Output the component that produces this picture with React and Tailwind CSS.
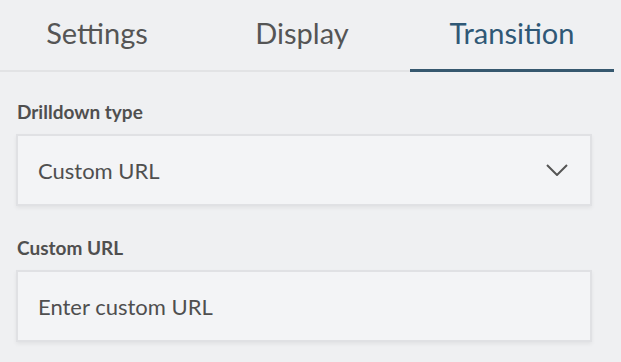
import React, { useState } from "react";

const tabs = ["Settings", "Display", "Transition"];
// widths picked so the labels sit where the design has them
const tabWidths = ["w-[194px]", "w-[216px]", "w-[204px]"];

function Chevron() {
  return (
    <svg width="22" height="12" viewBox="0 0 22 12" fill="none">
      <path d="M1 1 L11 11 L21 1" stroke="#555" strokeWidth="2" />
    </svg>
  );
}

export default function App() {
  const [active, setActive] = useState(2);

  return (
    <div className="w-[621px] h-[362px] bg-[#eff0f2] font-['Lato',sans-serif] text-[#4f4f4f]">
      {/* 탭 */}
      <div className="w-[614px] h-[72px] flex border-b-2 border-[#e2e3e5]">
        {tabs.map((t, i) => (
          <button
            key={t}
            onClick={() => setActive(i)}
            className={`relative ${tabWidths[i]} flex items-center justify-center pb-[4px] text-[29px] ${
              active === i ? "text-[#2f5876]" : "text-[#555555]"
            }`}
          >
            {t}
            {active === i && (
              <span className="absolute left-0 right-0 bottom-[-2px] h-[3px] bg-[#36586f]" />
            )}
          </button>
        ))}
      </div>

      <div className="ml-4 w-[576px]">
        {/* 드릴다운 타입 */}
        <div className="pt-[28px] pl-[1px] text-[19px] leading-[24px] font-bold">Drilldown type</div>
        <div className="mt-[10px] h-[72px] flex items-center justify-between border-2 border-[#e0e1e4] bg-[#f3f4f6] shadow-[0_2px_4px_rgba(0,0,0,0.06)] pl-[20px] pr-[22px] text-[22px]">
          <span>Custom URL</span>
          <Chevron />
        </div>

        {/* 커스텀 URL */}
        <div className="pt-[30px] pl-[1px] text-[19px] leading-[24px] font-bold">Custom URL</div>
        <input
          className="mt-[10px] w-full h-[72px] border-2 border-[#e0e1e4] bg-[#f3f4f6] shadow-[0_2px_4px_rgba(0,0,0,0.06)] pl-[20px] text-[22px] outline-none placeholder:text-[#4f4f4f]"
          placeholder="Enter custom URL"
        />
      </div>
    </div>
  );
}
